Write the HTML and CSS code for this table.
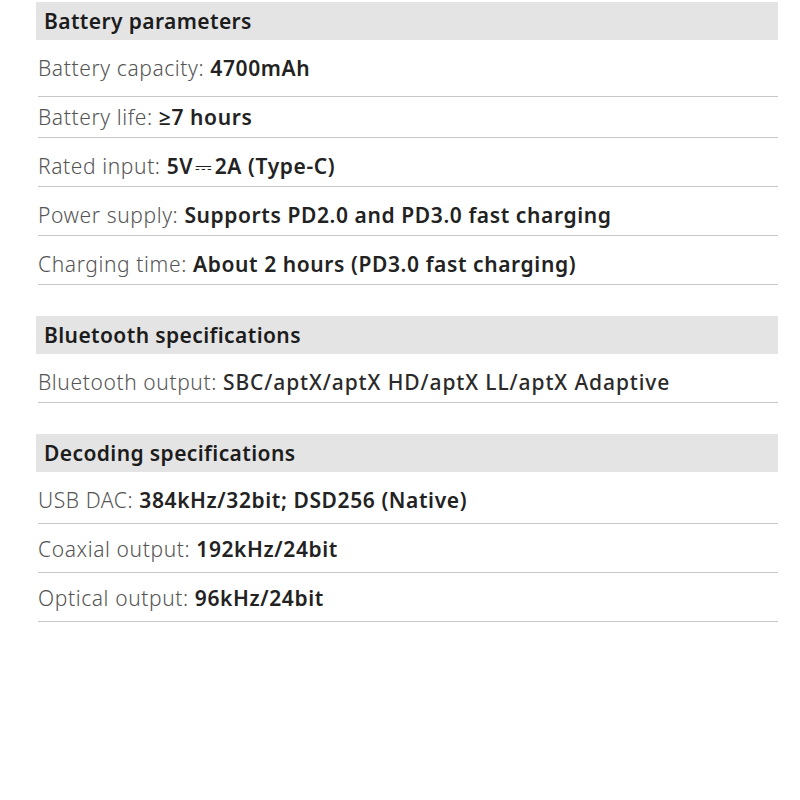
FILE: index.html
```html
<!DOCTYPE html>
<html lang="en">
<head>
  <meta charset="UTF-8">
  <meta name="viewport" content="width=device-width, initial-scale=1.0">
  <title>Specifications</title>
  <link rel="stylesheet" href="styles.css">
</head>
<body>
  <div class="specs">
    <section class="spec-group">
      <h2 class="spec-title">Battery parameters</h2>
      <div class="spec-row first">Battery capacity: <b>4700mAh</b></div>
      <div class="spec-row second">Battery life: <b>≥7 hours</b></div>
      <div class="spec-row">Rated input: <b>5V<span class="dc">⎓</span>2A (Type-C)</b></div>
      <div class="spec-row">Power supply: <b>Supports PD2.0 and PD3.0 fast charging</b></div>
      <div class="spec-row">Charging time: <b>About 2 hours (PD3.0 fast charging)</b></div>
    </section>

    <section class="spec-group">
      <h2 class="spec-title">Bluetooth specifications</h2>
      <div class="spec-row">Bluetooth output: <span class="plain">SBC/aptX/aptX HD/aptX LL/aptX Adaptive</span></div>
    </section>

    <section class="spec-group decoding">
      <h2 class="spec-title">Decoding specifications</h2>
      <div class="spec-row">USB DAC: <b>384kHz/32bit; DSD256 (Native)</b></div>
      <div class="spec-row">Coaxial output: <b>192kHz/24bit</b></div>
      <div class="spec-row">Optical output: <b>96kHz/24bit</b></div>
    </section>
  </div>
</body>
</html>
```

FILE: styles.css
```css
body {
  margin: 0;
  padding: 0;
  background: #ffffff;
  font-family: "Noto Sans", "Open Sans", sans-serif;
}

.specs {
  width: 742px;
  margin-left: 36px;
  padding-top: 2px;
  display: flex;
  flex-direction: column;
  gap: 31px;
}

.spec-title {
  margin: 0;
  height: 38px;
  line-height: 38px;
  padding-left: 8px;
  background: #e4e4e4;
  color: #1c1c1c;
  font-size: 21px;
  font-weight: 600;
  letter-spacing: 0.4px;
}

.spec-row {
  margin-left: 2px;
  padding: 14px 0 6px 0;
  line-height: 28px;
  font-size: 21px;
  font-weight: 300;
  letter-spacing: 0.6px;
  color: #555555;
  border-bottom: 1px solid #c8c8c8;
}

/* the first line in the source sits lower than the rest */
.spec-row.first {
  padding-bottom: 14px;
}

.spec-row.second {
  padding-top: 6px;
}

.decoding .spec-row {
  padding: 11px 0 9px 0;
}

.decoding .spec-title + .spec-row {
  padding-top: 14px;
}

.spec-row b {
  font-weight: 600;
  color: #222222;
}

.spec-row .plain {
  font-weight: 500;
  color: #2a2a2a;
  letter-spacing: 0.9px;
}

.dc {
  font-weight: 400;
  padding: 0 2px;
}
```
